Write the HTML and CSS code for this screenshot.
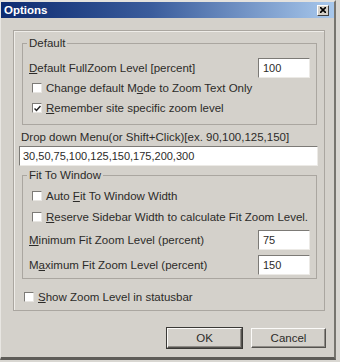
FILE: index.html
```html
<!DOCTYPE html>
<html>
<head>
<meta charset="utf-8">
<link rel="stylesheet" href="styles.css">
</head>
<body>
<div class="window">
  <div class="titlebar">
    <span class="title">Options</span>
    <span class="close"><svg width="6" height="6" viewBox="0 0 6 6"><path d="M0 0L6 6M6 0L0 6" stroke="#000" stroke-width="1.6"/></svg></span>
  </div>
  <div class="content">
    <div class="frame">
      <fieldset class="group g-default">
        <legend>Default</legend>
        <div class="row r1">
          <span><u>D</u>efault FullZoom Level [percent]</span>
          <span class="field small">100</span>
        </div>
        <div class="row"><span class="cb"></span><span>Change default M<u>o</u>de to Zoom Text Only</span></div>
        <div class="row"><span class="cb checked"><svg width="7" height="7" viewBox="0 0 7 7"><path d="M0.5 3.5L2.5 5.5L6.5 1" fill="none" stroke="#222" stroke-width="1.5"/></svg></span><span><u>R</u>emember site specific zoom level</span></div>
      </fieldset>
      <div class="droplabel">Drop down Menu(or Shift+Click)[ex. 90,100,125,150]</div>
      <div class="field wide">30,50,75,100,125,150,175,200,300</div>
      <fieldset class="group g-fit">
        <legend>Fit To Window</legend>
        <div class="row f1"><span class="cb"></span><span>Auto <u>F</u>it To Window Width</span></div>
        <div class="row f2"><span class="cb"></span><span><u>R</u>eserve Sidebar Width to calculate Fit Zoom Level.</span></div>
        <div class="row f3"><span><u>M</u>inimum Fit Zoom Level (percent)</span><span class="field small">75</span></div>
        <div class="row f4"><span>M<u>a</u>ximum Fit Zoom Level (percent)</span><span class="field small">150</span></div>
      </fieldset>
      <div class="row showrow"><span class="cb"></span><span><u>S</u>how Zoom Level in statusbar</span></div>
    </div>
    <div class="buttons">
      <span class="btn default">OK</span>
      <span class="btn">Cancel</span>
    </div>
  </div>
</div>
</body>
</html>
```
FILE: styles.css
```css
html, body {
  margin: 0;
  padding: 0;
  background: #d9d7d2;
}
body {
  width: 340px;
  height: 362px;
  overflow: hidden;
  font-family: "Liberation Sans", Arial, sans-serif;
  font-size: 11.5px;
  color: #2c2b29;
}
.window {
  width: 336px;
  height: 360px;
  background: #d4d1cb;
  border-top: 2px solid #e4e2de;
  border-left: 1px solid #e8e6e2;
  border-right: 2px solid #77756f;
  border-bottom: 3px solid #5e5c58;
  box-sizing: border-box;
}
.titlebar {
  height: 16px;
  background: linear-gradient(to right, #0c2a70 0%, #3a5c9c 45%, #a8c8ec 100%);
  display: flex;
  align-items: center;
  justify-content: space-between;
  padding-left: 3px;
  padding-right: 5px;
}
.title {
  color: #fff;
  font-weight: bold;
  font-size: 11.5px;
}
.close {
  width: 10px;
  height: 9px;
  background: #d4d0c8;
  border-top: 1px solid #fff;
  border-left: 1px solid #fff;
  border-right: 1px solid #404040;
  border-bottom: 1px solid #404040;
  display: flex;
  align-items: center;
  justify-content: center;
}
.content {
  padding: 12px 9px 0 12px;
}
.frame {
  border: 1px solid #aaa6a0;
  box-shadow: inset 1px 1px 0 #eeece8;
  padding: 5px 7px 2px 7px;
  height: 281px;
  box-sizing: border-box;
}
.group {
  margin: 0 0 0 1px;
  border: 1px solid #aaa6a0;
  padding: 0 6px 6px 6px;
  min-width: 0;
}
.group legend {
  padding: 0 2px;
  margin-left: -2px;
  line-height: 14px;
}
.row {
  display: flex;
  align-items: center;
  height: 20px;
  white-space: nowrap;
}
.r1 {
  margin-top: 8px;
  justify-content: space-between;
}
.f3, .f4 {
  justify-content: space-between;
}
.cb {
  width: 8px;
  height: 8px;
  background: #fff;
  border-top: 1px solid #7c7a76;
  border-left: 1px solid #7c7a76;
  border-right: 1px solid #e8e6e2;
  border-bottom: 1px solid #e8e6e2;
  margin-left: 3px;
  margin-right: 4px;
  flex: none;
  display: flex;
  align-items: center;
  justify-content: center;
}
.field {
  background: #fff;
  border-top: 1px solid #7c7a76;
  border-left: 1px solid #7c7a76;
  border-right: 1px solid #eceae6;
  border-bottom: 1px solid #eceae6;
  box-sizing: border-box;
  display: flex;
  align-items: center;
  padding-left: 4px;
  font-size: 11px;
  white-space: nowrap;
}
.small {
  width: 52px;
  height: 20px;
}
.droplabel {
  margin-top: 5px;
  height: 14px;
  line-height: 14px;
}
.wide {
  margin-top: 2px;
  margin-left: -2px;
  width: 299px;
  height: 20px;
  padding-left: 3px;
}
.g-fit {
  margin-top: 2px;
  padding-bottom: 3px;
}
.f1 { margin-top: 4px; }
.f2 { margin-top: 1px; }
.f3 { margin-top: 3px; }
.f4 { margin-top: 5px; }
.showrow {
  margin-top: 8px;
}
.showrow .cb {
  margin-left: 3px;
}
.buttons {
  display: flex;
  justify-content: flex-end;
  gap: 9px;
  margin-top: 17px;
  margin-right: -1px;
}
.btn {
  width: 75px;
  height: 20px;
  box-sizing: border-box;
  display: flex;
  align-items: center;
  justify-content: center;
  background: #d4d1cb;
  border-top: 1px solid #fbfaf8;
  border-left: 1px solid #fbfaf8;
  border-right: 1px solid #55534f;
  border-bottom: 1px solid #55534f;
  box-shadow: inset -1px -1px 0 #8e8b86;
}
.btn.default {
  outline: 1px solid #3a3936;
}
```
